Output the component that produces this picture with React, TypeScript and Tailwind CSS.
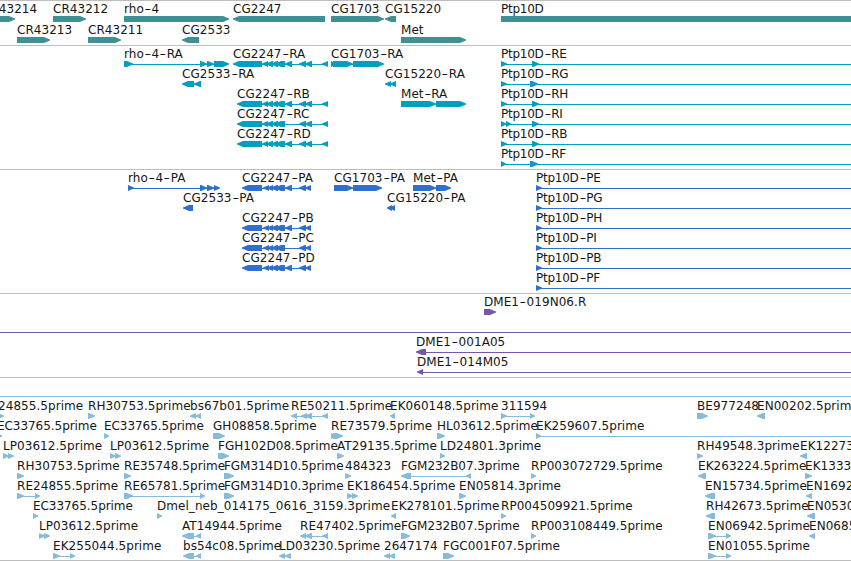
import React from "react";

type Exon = [number, number];
type Feature = {
  name?: string;
  at?: number;
  dir: 1 | -1;
  exons: Exon[];
  // horizontal extent of the intron line where it leaves the visible window
  span?: Exon;
};
type Track = { id: string; color: string; rowClass: string; endClass: string; rows: Feature[][] };

const VIEW = 851;

const f = (name: string, exons: Exon[], span?: Exon, at?: number): Feature => ({ name, dir: 1, exons, span, at });
const r = (name: string, exons: Exon[], span?: Exon, at?: number): Feature => ({ name, dir: -1, exons, span, at });
const line: Feature = { dir: 1, exons: [], span: [0, VIEW] };

const core: Exon[] = [[262, 268], [266, 273], [271, 278], [275, 285]];
const tail: Exon[] = [[299, 306], [305, 312], [322, 328]];
const pcore: Exon[] = [[263, 269], [267, 273], [271, 278], [275, 285]];
const ptail: Exon[] = [[299, 306], [305, 311]];
const ptp = (s: string, exons: Exon[]) => f("Ptp10D-" + s, exons, [exons[0][0], VIEW]);

const tracks: Track[] = [
  {
    id: "genes",
    color: "#3f8f95",
    rowClass: "h-[21px]",
    endClass: "pb-[2px]",
    rows: [
      [
        f("CR43214", [[-18, 15]]),
        f("CR43212", [[53, 86]]),
        f("rho-4", [[124, 229]]),
        r("CG2247", [[233, 325]]),
        f("CG1703", [[331, 384]]),
        r("CG15220", [[385, 396]]),
        f("Ptp10D", [[501, 870]]),
      ],
      [f("CR43213", [[17, 50]]), f("CR43211", [[88, 121]]), r("CG2533", [[182, 199]]), f("Met", [[401, 466]])],
    ],
  },
  {
    id: "transcripts",
    color: "#009ebf",
    rowClass: "h-5",
    endClass: "pb-[3px]",
    rows: [
      [
        f("rho-4-RA", [[124, 133], [200, 207], [207, 214], [214, 229]]),
        r("CG2247-RA", [[233, 262], ...core, [285, 292], ...tail]),
        f("CG1703-RA", [[331, 336], [333, 353], [353, 384]]),
        ptp("RE", [[501, 507], [532, 539]]),
      ],
      [
        r("CG2533-RA", [[182, 194], [194, 201]]),
        r("CG15220-RA", [[385, 391], [390, 396]]),
        ptp("RG", [[501, 507], [530, 538]]),
      ],
      [
        r("CG2247-RB", [[237, 262], ...core, [285, 292], ...tail]),
        f("Met-RA", [[401, 436], [436, 466]]),
        ptp("RH", [[501, 507], [532, 539]]),
      ],
      [r("CG2247-RC", [[237, 262], ...core, ...tail]), ptp("RI", [[501, 506], [506, 511], [532, 539]])],
      [r("CG2247-RD", [[237, 262], ...core, [285, 292], ...tail]), ptp("RB", [[501, 507], [532, 539]])],
      [ptp("RF", [[501, 506], [530, 538]])],
    ],
  },
  {
    id: "proteins",
    color: "#306fd0",
    rowClass: "h-5",
    endClass: "pb-[3px]",
    rows: [
      [
        f("rho-4-PA", [[128, 134], [200, 207], [207, 214], [214, 220]]),
        r("CG2247-PA", [[242, 262], ...pcore, [285, 292], ...ptail]),
        f("CG1703-PA", [[334, 353], [353, 382]]),
        f("Met-PA", [[413, 436], [436, 451]]),
        ptp("PE", [[536, 542]]),
      ],
      [r("CG2533-PA", [[183, 193]]), r("CG15220-PA", [[387, 392], [390, 395]]), ptp("PG", [[536, 542]])],
      [r("CG2247-PB", [[242, 262], ...pcore, [285, 292], ...ptail]), ptp("PH", [[536, 542]])],
      [r("CG2247-PC", [[242, 262], ...pcore, ...ptail]), ptp("PI", [[536, 542]])],
      [r("CG2247-PD", [[242, 262], ...pcore, [285, 292], ...ptail]), ptp("PB", [[536, 542]])],
      [ptp("PF", [[536, 542]])],
    ],
  },
  {
    id: "clones",
    color: "#7758a6",
    rowClass: "h-5",
    endClass: "pb-[3px]",
    rows: [
      [f("DME1-019N06.R", [[484, 496]])],
      [line],
      [r("DME1-001A05", [[416, 426]], [418, VIEW])],
      [r("DME1-014M05", [[417, 423]], [418, VIEW])],
    ],
  },
  {
    id: "ests",
    color: "#86bbdc",
    rowClass: "h-5",
    endClass: "pb-[2px]",
    rows: [
      [line],
      [
        f("RE24855.5prime", [[-2, 4]], undefined, -18),
        f("RH30753.5prime", [[88, 95]]),
        r("bs67b01.5prime", [[190, 196], [196, 201]]),
        r("RE50211.5prime", [[291, 297], [301, 307], [305, 312], [322, 328]]),
        r("EK060148.5prime", [[390, 395]]),
        f("311594", [[501, 507], [530, 535]]),
        f("BE977248", [[697, 708]]),
        r("EN00202.5prime", [[757, 765]]),
      ],
      [
        f("EC33765.5prime", [[-3, 2]]),
        f("EC33765.5prime", [[104, 109]]),
        f("GH08858.5prime", [[213, 225]]),
        f("RE73579.5prime", [[331, 336], [333, 343]]),
        f("HL03612.5prime", [[437, 445]]),
        f("EK259607.5prime", [[536, 541]], [536, VIEW]),
      ],
      [
        f("LP03612.5prime", [[3, 9], [8, 14]]),
        f("LP03612.5prime", [[110, 116], [115, 121]]),
        f("FGH102D08.5prime", [[218, 229]]),
        f("AT29135.5prime", [[337, 344]]),
        f("LD24801.3prime", [[440, 445]]),
        f("RH49548.3prime", [[697, 703]]),
        r("EK122737.5prime", [[800, 807]]),
      ],
      [
        f("RH30753.5prime", [[17, 24]]),
        f("RE35748.5prime", [[124, 131]]),
        f("FGM314D10.5prime", [[224, 234]]),
        f("484323", [[345, 351]]),
        r("FGM232B07.3prime", [[401, 411], [466, 471]]),
        f("RP003072729.5prime", [[531, 536]]),
        r("EK263224.5prime", [[698, 706]]),
        f("EK133331.5prime", [[805, 812]]),
      ],
      [
        f("RE24855.5prime", [[17, 24], [35, 40]]),
        f("RE65781.5prime", [[124, 133], [200, 205]]),
        f("FGM314D10.3prime", [[224, 234]]),
        f("EK186454.5prime", [[347, 353], [352, 358]]),
        f("EN05814.3prime", [[459, 466]]),
        r("EN15734.5prime", [[705, 715]]),
        r("EN16920.5prime", [[806, 812]]),
      ],
      [
        f("EC33765.5prime", [[33, 38]]),
        f("Dmel_neb_014175_0616_3159.3prime", [[157, 162]]),
        r("EK278101.5prime", [[391, 396]]),
        f("RP004509921.5prime", [[501, 506]]),
        r("RH42673.5prime", [[706, 715]]),
        r("EN05300.5prime", [[807, 815]]),
      ],
      [
        f("LP03612.5prime", [[39, 45], [44, 50]]),
        r("AT14944.5prime", [[182, 194], [196, 201]]),
        r("RE47402.5prime", [[300, 306], [305, 312], [322, 328]]),
        f("FGM232B07.5prime", [[401, 410]]),
        f("RP003108449.5prime", [[531, 536]]),
        f("EN06942.5prime", [[708, 716], [726, 731]]),
        r("EN06850.5prime", [[809, 815]]),
      ],
      [
        f("EK255044.5prime", [[53, 60], [70, 75]]),
        r("bs54c08.5prime", [[183, 194], [196, 201]]),
        r("LD03230.5prime", [[279, 285], [285, 291]]),
        r("2647174", [[384, 390], [389, 395]]),
        f("FGC001F07.5prime", [[443, 454]]),
        f("EN01055.5prime", [[708, 716], [726, 731]]),
      ],
    ],
  },
];

// Block with a pointed end; short exons collapse to a triangle.
function exonPath([a, b]: Exon, dir: 1 | -1) {
  const head = Math.min(6, b - a);
  return dir === 1
    ? `M${a} 0H${b - head}L${b} 2.5V3.5L${b - head} 6H${a}Z`
    : `M${b} 0H${a + head}L${a} 2.5V3.5L${a + head} 6H${b}Z`;
}

// Hyphens are stretched to the width of a digit.
function Label({ text }: { text: string }) {
  return text.split("-").map((part, i) => (
    <React.Fragment key={i}>
      {i > 0 && <span className="inline-block w-[7.6px] origin-center scale-x-150 text-center">-</span>}
      {part}
    </React.Fragment>
  ));
}

function tracking(name: string) {
  if (name.startsWith("Ptp")) return "tracking-[-0.25px]";
  if (name.startsWith("EC") || name.startsWith("FGM")) return "tracking-[-0.05px]";
  return "tracking-[0.05px]";
}

function Row({ features, color, className }: { features: Feature[]; color: string; className: string }) {
  return (
    <div className={`relative overflow-visible ${className}`}>
      <div className="h-[15px]">
        {features.map(
          (x, i) =>
            x.name && (
              <span
                key={i}
                className={`absolute top-px whitespace-pre text-[12px] leading-[15px] ${tracking(x.name)}`}
                style={{ left: x.at ?? x.exons[0][0] }}
              >
                <Label text={x.name} />
              </span>
            ),
        )}
      </div>
      <svg width={VIEW} height="6" className="block" fill={color}>
        {features.map((x, i) => {
          const [from, to] = x.span ?? [x.exons[0][0] + 2, x.exons[x.exons.length - 1][1] - 2];
          return (
            <g key={i}>
              {(x.span || x.exons.length > 1) && (
                <rect x={from} y="3" width={to - from} height="1" shapeRendering="crispEdges" />
              )}
              {x.exons.map((e, j) => (
                <path key={j} d={exonPath(e, x.dir)} />
              ))}
            </g>
          );
        })}
      </svg>
    </div>
  );
}

export default function App() {
  return (
    <main className="h-[561px] w-[851px] overflow-hidden border-b border-[#bdbdbd] bg-white font-['DejaVu_Sans',sans-serif] text-[#161616]">
      {tracks.map((t) => (
        <section key={t.id} className={`border-t border-[#bdbdbd] ${t.endClass}`}>
          {t.rows.map((row, i) => (
            <Row key={i} features={row} color={t.color} className={t.rowClass} />
          ))}
        </section>
      ))}
    </main>
  );
}
